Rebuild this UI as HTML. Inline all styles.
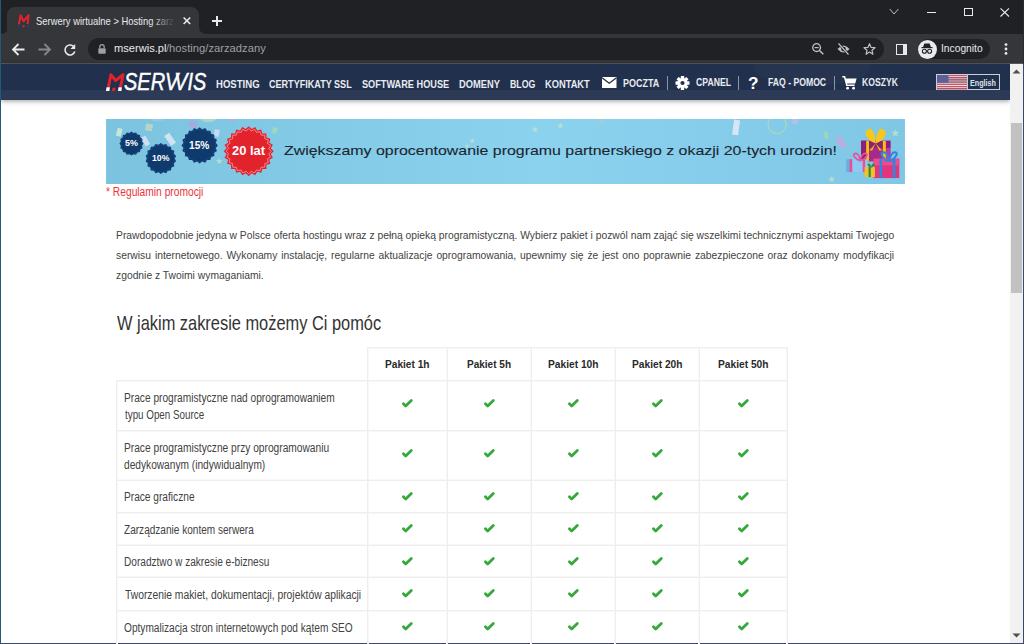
<!DOCTYPE html><html><head><meta charset="utf-8"><style>
*{margin:0;padding:0;box-sizing:border-box}
html,body{width:1024px;height:644px;overflow:hidden;background:#fff;font-family:"Liberation Sans",sans-serif}
.a{position:absolute}
.t{position:absolute;white-space:nowrap;transform-origin:0 0;line-height:normal}
svg{position:absolute;overflow:visible}
</style></head><body><div class="a" style="left:0;top:0;width:1024px;height:34px;background:#202124"></div><div class="a" style="left:7px;top:7px;width:192px;height:27px;background:#35363a;border-radius:8px 8px 0 0"></div><svg style="left:0;top:26px" width="8" height="8"><path d="M0 8 Q8 8 8 0 L8 8 Z" fill="#35363a"/></svg><svg style="left:199px;top:26px" width="8" height="8"><path d="M0 0 Q0 8 8 8 L0 8 Z" fill="#35363a"/></svg><svg style="left:16px;top:13px" width="15" height="15" viewBox="0 0 15 15"><polyline points="2.9,11.2 4.6,2.2 7.6,8.2 12.6,2.2 11.6,11.2" stroke="#e3232c" stroke-width="2" fill="none" stroke-linejoin="round"/><rect x="1.6" y="12.3" width="2.2" height="1.8" fill="#1b3f8a"/><rect x="6.6" y="12.3" width="2" height="1.8" fill="#e3232c"/><rect x="11" y="12.3" width="2.2" height="1.8" fill="#1b3f8a"/></svg><div class="a" style="left:0;top:0;width:178px;height:34px;overflow:hidden"><span class="t" style="left:35.55px;top:14.70px;font:10.5px 'Liberation Sans';color:#e8eaed;transform:scaleX(0.8962);">Serwery wirtualne &gt; Hosting zarzadzany</span></div><div class="a" style="left:150px;top:10px;width:28px;height:20px;background:linear-gradient(90deg,rgba(53,54,58,0),#35363a 90%)"></div><div class="a" style="left:176px;top:10px;width:20px;height:20px;background:#35363a"></div><svg style="left:183px;top:17.3px" width="8" height="7.5"><path d="M0.6 0.5 L7.2 7 M7.2 0.5 L0.6 7" stroke="#e8eaed" stroke-width="1.6"/></svg><svg style="left:212px;top:16px" width="10" height="10"><path d="M5 0 V10 M0 5 H10" stroke="#e8eaed" stroke-width="2"/></svg><svg style="left:889px;top:8px" width="11" height="8"><path d="M0.8 1 L5 6 L9.4 1" stroke="#bdc1c6" stroke-width="1" fill="none"/></svg><div class="a" style="left:927px;top:12px;width:9px;height:1px;background:#e8eaed"></div><div class="a" style="left:964px;top:8px;width:8.5px;height:8px;border:1px solid #e8eaed"></div><svg style="left:1000px;top:8px" width="10" height="9"><path d="M0.5 0.3 L9 8.5 M9 0.3 L0.5 8.5" stroke="#e8eaed" stroke-width="1.1"/></svg><div class="a" style="left:0;top:34px;width:1024px;height:29px;background:#35363a"></div><div class="a" style="left:0;top:63px;width:1024px;height:1px;background:#5a5b5f"></div><svg style="left:12px;top:43px" width="13" height="13"><path d="M12.5 6.5 H1.5 M6.5 1 L1 6.5 L6.5 12" stroke="#e8eaed" stroke-width="1.8" fill="none"/></svg><svg style="left:38px;top:43px" width="13" height="13"><path d="M0.5 6.5 H11.5 M6.5 1 L12 6.5 L6.5 12" stroke="#85878a" stroke-width="1.8" fill="none"/></svg><svg style="left:63px;top:42.5px" width="14" height="14"><path d="M11.2 4.2 A5 5 0 1 0 11.8 8.5" stroke="#e8eaed" stroke-width="1.6" fill="none"/><path d="M12.2 1 V6 H7.4 Z" fill="#e8eaed"/></svg><div class="a" style="left:88px;top:38px;width:796px;height:22px;background:#202124;border-radius:11px"></div><svg style="left:98px;top:43.5px" width="8" height="10"><path d="M1.8 4.2 V2.9 A2.2 2.2 0 0 1 6.2 2.9 V4.2" stroke="#9aa0a6" stroke-width="1.2" fill="none"/><rect x="0.3" y="4.2" width="7.4" height="5.5" rx="0.8" fill="#9aa0a6"/></svg><span class="t" style="left:114.29px;top:42.45px;font:11px 'Liberation Sans';color:#e8eaed;transform:scaleX(1.0099);">mserwis.pl</span><span class="t" style="left:166.30px;top:42.45px;font:11px 'Liberation Sans';color:#9aa0a6;transform:scaleX(1.0194);">/hosting/zarzadzany</span><svg style="left:812px;top:43px" width="12" height="12"><circle cx="4.6" cy="4.6" r="3.9" stroke="#bdc1c6" stroke-width="1.3" fill="none"/><path d="M2.6 4.6 H6.6" stroke="#bdc1c6" stroke-width="1.2"/><path d="M7.5 7.5 L11.3 11.3" stroke="#bdc1c6" stroke-width="1.5"/></svg><svg style="left:837px;top:43px" width="13" height="12"><path d="M0.5 6 Q6.5 -1 12.5 6 Q6.5 13 0.5 6 Z" fill="#bdc1c6"/><circle cx="6.5" cy="6" r="2.3" fill="#202124"/><path d="M1.5 0.5 L11.5 11.5" stroke="#202124" stroke-width="2.6"/><path d="M1.5 0.5 L11.5 11.5" stroke="#bdc1c6" stroke-width="1.2"/></svg><svg style="left:863px;top:43px" width="13" height="12"><path d="M6.5 0.8 L8.1 4.4 L12 4.7 L9 7.3 L9.9 11.2 L6.5 9.1 L3.1 11.2 L4 7.3 L1 4.7 L4.9 4.4 Z" stroke="#bdc1c6" stroke-width="1.2" fill="none" stroke-linejoin="round"/></svg><div class="a" style="left:896px;top:43.5px;width:11px;height:11px;border:1.5px solid #e8eaed;border-right-width:4px"></div><div class="a" style="left:917.5px;top:39px;width:72px;height:20px;background:#202124;border-radius:10px"></div><div class="a" style="left:917.5px;top:39.5px;width:19px;height:19px;background:#e8eaed;border-radius:50%"></div><svg style="left:920px;top:42px" width="14" height="14"><path d="M3 5.2 L4.4 1.5 H9.6 L11 5.2 Z" fill="#202124"/><rect x="1.5" y="5" width="11" height="1.2" fill="#202124"/><circle cx="4.4" cy="9.3" r="2" stroke="#202124" stroke-width="1.1" fill="none"/><circle cx="9.6" cy="9.3" r="2" stroke="#202124" stroke-width="1.1" fill="none"/><path d="M6.4 9 H7.6" stroke="#202124" stroke-width="1"/></svg><span class="t" style="left:941.48px;top:43.15px;font:10px 'Liberation Sans';color:#e8eaed;transform:scaleX(1.0254);">Incognito</span><svg style="left:1004px;top:43px" width="4" height="12"><circle cx="2" cy="1.6" r="1.4" fill="#e8eaed"/><circle cx="2" cy="6" r="1.4" fill="#e8eaed"/><circle cx="2" cy="10.4" r="1.4" fill="#e8eaed"/></svg><div class="a" style="left:1px;top:64px;width:1009px;height:36px;background:#21304c;box-shadow:0 1px 5px rgba(0,0,0,.4)"></div><div class="a" style="left:1px;top:89.5px;width:1009px;height:10px;background:#2d3a55"></div><div class="a" style="left:1px;top:64px;width:1009px;height:25.5px;overflow:hidden"><div class="a" style="left:752px;top:-18px;width:118px;height:40px;border-radius:50%;background:rgba(255,255,255,0.022)"></div></div><svg style="left:104px;top:72px" width="24" height="20" viewBox="0 0 24 20"><polyline points="4.4,15.2 6.9,2.7 11.6,8.6 19,2.7 16.5,15.2" stroke="#e52229" stroke-width="3" fill="none" stroke-linejoin="round"/><path d="M2.5 15.3 H5.9 L5.4 19.1 H2 Z" fill="#fff"/><path d="M8.4 15.7 H11.6 L11.2 19 H8 Z" fill="#e52229"/><path d="M14.5 15.3 H17.9 L17.4 19.1 H14 Z" fill="#fff"/></svg><div class="t" style="left:124.3px;top:69.4px;font:italic 23.5px 'Liberation Sans';color:#fff;-webkit-text-stroke:0.45px #fff;transform:scaleX(0.85)">SER<span style="letter-spacing:-5px">V</span>VIS</div><span class="t" style="left:216.16px;top:77.60px;font:bold 10.5px 'Liberation Sans';color:#e9ecf1;transform:scaleX(0.9118);">HOSTING</span><span class="t" style="left:269.46px;top:77.60px;font:bold 10.5px 'Liberation Sans';color:#e9ecf1;transform:scaleX(0.8623);">CERTYFIKATY SSL</span><span class="t" style="left:362.24px;top:77.60px;font:bold 10.5px 'Liberation Sans';color:#e9ecf1;transform:scaleX(0.8737);">SOFTWARE HOUSE</span><span class="t" style="left:459.08px;top:77.60px;font:bold 10.5px 'Liberation Sans';color:#e9ecf1;transform:scaleX(0.8872);">DOMENY</span><span class="t" style="left:510.01px;top:77.60px;font:bold 10.5px 'Liberation Sans';color:#e9ecf1;transform:scaleX(0.8379);">BLOG</span><span class="t" style="left:544.98px;top:77.60px;font:bold 10.5px 'Liberation Sans';color:#e9ecf1;transform:scaleX(0.8853);">KONTAKT</span><svg style="left:602px;top:77px" width="15" height="11"><rect x="0" y="0" width="14.5" height="11" fill="#fff"/><path d="M0 0.8 L7.25 6.2 L14.5 0.8" stroke="#21304c" stroke-width="1.4" fill="none"/></svg><span class="t" style="left:623.40px;top:76.60px;font:bold 10.5px 'Liberation Sans';color:#e9ecf1;transform:scaleX(0.8551);">POCZTA</span><div class="a" style="left:667.3px;top:75.5px;width:1px;height:14px;background:#8b95a8"></div><div class="a" style="left:738.3px;top:75.5px;width:1px;height:14px;background:#8b95a8"></div><div class="a" style="left:833.5px;top:75.5px;width:1px;height:14px;background:#8b95a8"></div><svg style="left:674.5px;top:75.5px" width="15" height="14" viewBox="-7.5 -7 15 14"><g fill="#fff"><rect x="-1.7" y="-7" width="3.4" height="3.5" rx="0.5" transform="rotate(0)"/><rect x="-1.7" y="-7" width="3.4" height="3.5" rx="0.5" transform="rotate(45)"/><rect x="-1.7" y="-7" width="3.4" height="3.5" rx="0.5" transform="rotate(90)"/><rect x="-1.7" y="-7" width="3.4" height="3.5" rx="0.5" transform="rotate(135)"/><rect x="-1.7" y="-7" width="3.4" height="3.5" rx="0.5" transform="rotate(180)"/><rect x="-1.7" y="-7" width="3.4" height="3.5" rx="0.5" transform="rotate(225)"/><rect x="-1.7" y="-7" width="3.4" height="3.5" rx="0.5" transform="rotate(270)"/><rect x="-1.7" y="-7" width="3.4" height="3.5" rx="0.5" transform="rotate(315)"/><circle r="5"/></g><circle r="2.1" fill="#21304c"/></svg><span class="t" style="left:696.17px;top:76.30px;font:bold 10.5px 'Liberation Sans';color:#e9ecf1;transform:scaleX(0.8249);">CPANEL</span><span class="t" style="left:748.19px;top:73.61px;font:bold 17px 'Liberation Sans';color:#ffffff;transform:scaleX(1.0116);">?</span><span class="t" style="left:767.92px;top:76.30px;font:bold 10.5px 'Liberation Sans';color:#e9ecf1;transform:scaleX(0.8233);">FAQ - POMOC</span><svg style="left:842px;top:75.5px" width="15" height="14" viewBox="0 0 15 14"><path d="M0.3 0.8 H2.6 L4.8 9.3 H12.6" stroke="#fff" stroke-width="1.5" fill="none"/><path d="M3.4 2.6 H14.6 L13.2 7.6 H4.6 Z" fill="#fff"/><circle cx="5.6" cy="12.2" r="1.4" fill="#fff"/><circle cx="11.6" cy="12.2" r="1.4" fill="#fff"/></svg><span class="t" style="left:862.33px;top:76.40px;font:bold 10.5px 'Liberation Sans';color:#e9ecf1;transform:scaleX(0.8205);">KOSZYK</span><div class="a" style="left:936px;top:73.8px;width:64px;height:16.4px;border:1px solid #c9ced8;background:#21304c"></div><svg style="left:937px;top:74.8px" width="30" height="14.4" viewBox="0 0 30 14.4"><rect x="0" y="0.000" width="30" height="1.108" fill="#d25666"/><rect x="0" y="1.108" width="30" height="1.108" fill="#f2dde1"/><rect x="0" y="2.215" width="30" height="1.108" fill="#d25666"/><rect x="0" y="3.323" width="30" height="1.108" fill="#f2dde1"/><rect x="0" y="4.431" width="30" height="1.108" fill="#d25666"/><rect x="0" y="5.538" width="30" height="1.108" fill="#f2dde1"/><rect x="0" y="6.646" width="30" height="1.108" fill="#d25666"/><rect x="0" y="7.754" width="30" height="1.108" fill="#f2dde1"/><rect x="0" y="8.862" width="30" height="1.108" fill="#d25666"/><rect x="0" y="9.969" width="30" height="1.108" fill="#f2dde1"/><rect x="0" y="11.077" width="30" height="1.108" fill="#d25666"/><rect x="0" y="12.185" width="30" height="1.108" fill="#f2dde1"/><rect x="0" y="13.292" width="30" height="1.108" fill="#d25666"/><rect x="0" y="0" width="11.5" height="7.754" fill="#5c6299"/></svg><div class="a" style="left:967px;top:74.8px;width:1px;height:14.4px;background:#c9ced8"></div><span class="t" style="left:970.35px;top:76.70px;font:bold 9.5px 'Liberation Sans';color:#dfe3ea;transform:scaleX(0.7553);">English</span><div class="a" style="left:1009.5px;top:64px;width:13.5px;height:579px;background:#f1f1f1"></div><div class="a" style="left:1011px;top:123px;width:10.8px;height:169.5px;background:#c1c1c1"></div><svg style="left:1011px;top:67px" width="11" height="8"><path d="M1.5 6.5 L5.5 2.5 L9.5 6.5 Z" fill="#505050"/></svg><svg style="left:1011px;top:632px" width="11" height="8"><path d="M1.5 1.5 L5.5 5.5 L9.5 1.5 Z" fill="#505050"/></svg><div class="a" style="left:0;top:0;width:1px;height:644px;background:#235a78"></div><div class="a" style="left:1023px;top:64px;width:1px;height:580px;background:#3a4a6c"></div><div class="a" style="left:1023px;top:0;width:1px;height:64px;background:#2a2b30"></div><div class="a" style="left:0;top:643px;width:1024px;height:1px;background:#3a4a6c"></div><svg style="left:105.8px;top:118.6px;overflow:hidden" width="799.0" height="65.1" viewBox="0 0 799.0 65.1"><defs><linearGradient id="bg" x1="0" y1="0" x2="1" y2="0"><stop offset="0" stop-color="#7bc3df"/><stop offset="0.55" stop-color="#8bd2ef"/><stop offset="1" stop-color="#80c7e6"/></linearGradient></defs><rect width="799.0" height="65.1" fill="url(#bg)"/><rect x="10.7" y="9.2" width="5" height="8" fill="#d8ecd8" opacity="0.8" transform="rotate(15 13.2 13.2)"/><rect x="39.5" y="4.8" width="7" height="7" fill="#c4d8c0" opacity="0.8" transform="rotate(10 43.0 8.3)"/><rect x="37.0" y="17.0" width="5" height="10" fill="#e2e4f4" opacity="0.8" transform="rotate(-30 39.5 22.0)"/><rect x="61.1" y="14.3" width="6" height="12" fill="#e4eaf6" opacity="0.8" transform="rotate(-35 64.1 20.3)"/><rect x="83.0" y="2.3" width="8" height="6" fill="#b0a4dc" opacity="0.8" transform="rotate(15 87.0 5.3)"/><rect x="108.2" y="10.6" width="5" height="7" fill="#dcdcf4" opacity="0.8" transform="rotate(10 110.7 14.1)"/><rect x="166.2" y="8.4" width="5" height="6" fill="#a8dcb0" opacity="0.8" transform="rotate(20 168.7 11.4)"/><rect x="123.5" y="-0.6" width="6" height="3" fill="#b8a8e0" opacity="0.8" transform="rotate(0 126.5 0.9)"/><rect x="492.7" y="0.4" width="4" height="4" fill="#a8d0c0" opacity="0.8" transform="rotate(0 494.7 2.4)"/><rect x="627.1" y="0.9" width="6" height="15" fill="#e8eef8" opacity="0.8" transform="rotate(8 630.1 8.4)"/><rect x="685.9" y="-0.1" width="6" height="5" fill="#c8b8ec" opacity="0.8" transform="rotate(20 688.9 2.4)"/><rect x="718.2" y="12.4" width="4" height="8" fill="#a0d8b0" opacity="0.8" transform="rotate(-15 720.2 16.4)"/><rect x="732.2" y="17.4" width="6" height="12" fill="#c8a8e0" opacity="0.8" transform="rotate(-35 735.2 23.4)"/><circle cx="671.1" cy="5.6" r="9" fill="none" stroke="#bfe0a0" stroke-width="1.3" opacity="0.6"/><path d="M94.2 0 A9 6 0 0 0 110.2 0 Z" fill="#d8e8b0" opacity="0.5"/><path d="M44.2 0 A8 5 0 0 0 58.2 0 Z" fill="#a8d0e8" opacity="0.5"/><path d="M25.40,12.60 L27.51,14.01 L29.99,13.51 L31.40,15.62 L33.89,16.11 L34.38,18.60 L36.49,20.01 L35.99,22.49 L37.40,24.60 L35.99,26.71 L36.49,29.19 L34.38,30.60 L33.89,33.09 L31.40,33.58 L29.99,35.69 L27.51,35.19 L25.40,36.60 L23.29,35.19 L20.81,35.69 L19.40,33.58 L16.91,33.09 L16.42,30.60 L14.31,29.19 L14.81,26.71 L13.40,24.60 L14.81,22.49 L14.31,20.01 L16.42,18.60 L16.91,16.11 L19.40,15.62 L20.81,13.51 L23.29,14.01 Z" fill="#0f3a6e"/><circle cx="25.4" cy="24.6" r="10.6" fill="none" stroke="#5a7aa8" stroke-width="0.5" stroke-dasharray="1 1" opacity="0.8"/><path d="M54.80,24.10 L57.22,25.86 L60.10,25.03 L61.77,27.52 L64.76,27.73 L65.49,30.63 L68.22,31.85 L67.91,34.83 L70.06,36.91 L68.75,39.60 L70.06,42.29 L67.91,44.37 L68.22,47.35 L65.49,48.57 L64.76,51.47 L61.78,51.68 L60.10,54.17 L57.22,53.34 L54.80,55.10 L52.38,53.34 L49.50,54.17 L47.82,51.68 L44.84,51.47 L44.11,48.57 L41.38,47.35 L41.69,44.37 L39.54,42.29 L40.85,39.60 L39.54,36.91 L41.69,34.83 L41.38,31.85 L44.11,30.63 L44.84,27.73 L47.83,27.52 L49.50,25.03 L52.38,25.86 Z" fill="#0f3a6e"/><circle cx="54.8" cy="39.6" r="13.6" fill="none" stroke="#5a7aa8" stroke-width="0.5" stroke-dasharray="1 1" opacity="0.8"/><path d="M93.60,8.20 L96.16,10.22 L99.22,9.09 L101.04,11.81 L104.30,11.68 L105.18,14.82 L108.32,15.70 L108.19,18.96 L110.91,20.78 L109.78,23.84 L111.80,26.40 L109.78,28.96 L110.91,32.02 L108.19,33.84 L108.32,37.10 L105.18,37.98 L104.30,41.12 L101.04,40.99 L99.22,43.71 L96.16,42.58 L93.60,44.60 L91.04,42.58 L87.98,43.71 L86.16,40.99 L82.90,41.12 L82.02,37.98 L78.88,37.10 L79.01,33.84 L76.29,32.02 L77.42,28.96 L75.40,26.40 L77.42,23.84 L76.29,20.78 L79.01,18.96 L78.88,15.70 L82.02,14.82 L82.90,11.68 L86.16,11.81 L87.98,9.09 L91.04,10.22 Z" fill="#0f3a6e"/><circle cx="93.6" cy="26.4" r="16.0" fill="none" stroke="#5a7aa8" stroke-width="0.5" stroke-dasharray="1 1" opacity="0.8"/><path d="M142.70,7.20 L145.61,10.09 L149.17,8.05 L151.23,11.60 L155.20,10.55 L156.28,14.51 L160.38,14.52 L160.39,18.62 L164.35,19.70 L163.30,23.67 L166.85,25.73 L164.81,29.29 L167.70,32.20 L164.81,35.11 L166.85,38.67 L163.30,40.73 L164.35,44.70 L160.39,45.78 L160.38,49.88 L156.28,49.89 L155.20,53.85 L151.23,52.80 L149.17,56.35 L145.61,54.31 L142.70,57.20 L139.79,54.31 L136.23,56.35 L134.17,52.80 L130.20,53.85 L129.12,49.89 L125.02,49.88 L125.01,45.78 L121.05,44.70 L122.10,40.73 L118.55,38.67 L120.59,35.11 L117.70,32.20 L120.59,29.29 L118.55,25.73 L122.10,23.67 L121.05,19.70 L125.01,18.62 L125.02,14.52 L129.12,14.51 L130.20,10.55 L134.17,11.60 L136.23,8.05 L139.79,10.09 Z" fill="#e3232c"/><path d="M142.70,9.60 L145.35,12.07 L148.55,10.37 L150.47,13.45 L154.00,12.63 L155.06,16.09 L158.68,16.22 L158.81,19.84 L162.27,20.90 L161.45,24.43 L164.53,26.35 L162.83,29.55 L165.30,32.20 L162.83,34.85 L164.53,38.05 L161.45,39.97 L162.27,43.50 L158.81,44.56 L158.68,48.18 L155.06,48.31 L154.00,51.77 L150.47,50.95 L148.55,54.03 L145.35,52.33 L142.70,54.80 L140.05,52.33 L136.85,54.03 L134.93,50.95 L131.40,51.77 L130.34,48.31 L126.72,48.18 L126.59,44.56 L123.13,43.50 L123.95,39.97 L120.87,38.05 L122.57,34.85 L120.10,32.20 L122.57,29.55 L120.87,26.35 L123.95,24.43 L123.13,20.90 L126.59,19.84 L126.72,16.22 L130.34,16.09 L131.40,12.63 L134.93,13.45 L136.85,10.37 L140.05,12.07 Z" fill="none" stroke="#f6b0b4" stroke-width="0.7"/><rect x="755.10" y="21.80" width="29.30" height="20.60" fill="#a42a8e" /><rect x="755.10" y="21.80" width="5.10" height="20.60" fill="#8f2079" /><rect x="778.20" y="21.80" width="6.20" height="20.60" fill="#b93ba2" /><rect x="755.10" y="21.80" width="29.30" height="7.10" fill="#8c1f7c" /><rect x="760.20" y="21.80" width="2.80" height="20.60" fill="#f5c20a" /><rect x="776.90" y="21.80" width="3.00" height="20.60" fill="#f5c20a" /><path d="M769.7 24.4 C 760.2 21.4 756.2 11.4 763.2 9.9 C 767.2 9.4 769.2 16.4 769.7 24.4 Z" fill="#f7c81a"/><path d="M769.7 24.4 C 779.2 21.4 783.2 11.4 776.2 9.9 C 772.2 9.4 770.2 16.4 769.7 24.4 Z" fill="#f7c81a"/><path d="M769.7 24.4 L763.2 31.4 L766.2 31.4 Z M769.7 24.4 L776.2 31.4 L773.2 31.4 Z" fill="#f0b800"/><rect x="740.20" y="40.20" width="21.30" height="12.90" fill="#8fcaf2" /><rect x="740.20" y="40.20" width="6.00" height="12.90" fill="#6aaee0" /><rect x="743.60" y="40.20" width="2.60" height="12.90" fill="#ec4f9a" /><rect x="756.70" y="40.20" width="2.50" height="12.90" fill="#ec4f9a" /><path d="M751.7 40.9 q-7 -6 -2 -6.5 q3 0 4.5 6.5 q2 -6.5 5 -6.5 q5 0.5 -2.5 6.5 z" fill="none" stroke="#ec4f9a" stroke-width="1.6"/><rect x="767.50" y="39.70" width="25.80" height="19.40" fill="#e2357b" /><rect x="767.50" y="39.70" width="25.80" height="6.70" fill="#ef4c8c" /><rect x="773.50" y="39.70" width="2.70" height="19.40" fill="#2f86e0" /><rect x="786.80" y="39.70" width="2.70" height="19.40" fill="#2f86e0" /><path d="M780.2 41.7 q-8 -8 -2.5 -8.5 q3.5 0 5.5 8.5 q2 -8.5 5.5 -8.5 q5.5 0.5 -3 8.5 z" fill="none" stroke="#2f86e0" stroke-width="2"/><rect x="758.60" y="48.10" width="10.40" height="10.00" fill="#f2c22a" /><rect x="762.60" y="48.10" width="2.20" height="10.00" fill="#2e8b3a" /><path d="M763.7 48.6 q-4 -4 -1 -4 q2 0 2.3 4 q0.5 -4 2.5 -4 q3 0 -1.5 4 z" fill="#2e8b3a"/><path d="M789.40,10.30 L790.46,12.84 L793.20,13.06 L791.11,14.86 L791.75,17.54 L789.40,16.10 L787.05,17.54 L787.69,14.86 L785.60,13.06 L788.34,12.84 Z" fill="#cfe6c0" opacity="0.7"/><path d="M725.80,56.80 L726.73,59.03 L729.13,59.22 L727.30,60.79 L727.86,63.13 L725.80,61.88 L723.74,63.13 L724.30,60.79 L722.47,59.22 L724.87,59.03 Z" fill="#cfe6c0" opacity="0.7"/><path d="M113.30,38.70 L114.23,40.93 L116.63,41.12 L114.80,42.69 L115.36,45.03 L113.30,43.78 L111.24,45.03 L111.80,42.69 L109.97,41.12 L112.37,40.93 Z" fill="#cfe6c0" opacity="0.7"/><path d="M428.90,7.20 L429.77,9.30 L432.04,9.48 L430.31,10.96 L430.84,13.17 L428.90,11.98 L426.96,13.17 L427.49,10.96 L425.76,9.48 L428.03,9.30 Z" fill="#cfe6c0" opacity="0.7"/><path d="M454.50,3.50 L455.37,5.60 L457.64,5.78 L455.91,7.26 L456.44,9.47 L454.50,8.29 L452.56,9.47 L453.09,7.26 L451.36,5.78 L453.63,5.60 Z" fill="#cfe6c0" opacity="0.7"/><path d="M366.20,18.80 L366.99,20.71 L369.05,20.87 L367.48,22.22 L367.96,24.23 L366.20,23.15 L364.44,24.23 L364.92,22.22 L363.35,20.87 L365.41,20.71 Z" fill="#cfe6c0" opacity="0.7"/><path d="M361.10,24.60 L361.76,26.19 L363.48,26.33 L362.17,27.45 L362.57,29.12 L361.10,28.22 L359.63,29.12 L360.03,27.45 L358.72,26.33 L360.44,26.19 Z" fill="#cfe6c0" opacity="0.7"/></svg><span class="t" style="left:124.79px;top:138.22px;font:bold 8.6px 'Liberation Sans';color:#ffffff;transform:scaleX(1.0336);">5%</span><span class="t" style="left:151.72px;top:153.25px;font:bold 9px 'Liberation Sans';color:#ffffff;transform:scaleX(0.9709);">10%</span><span class="t" style="left:189.49px;top:138.41px;font:bold 11.7px 'Liberation Sans';color:#ffffff;transform:scaleX(0.8661);">15%</span><span class="t" style="left:231.87px;top:143.84px;font:bold 12px 'Liberation Sans';color:#ffffff;transform:scaleX(1.0797);">20 lat</span><span class="t" style="left:283.83px;top:143.28px;font:13.5px 'Liberation Sans';color:#1d2530;transform:scaleX(1.1791);-webkit-text-stroke:0.1px #1d2530">Zwiększamy oprocentowanie programu partnerskiego z okazji 20-tych urodzin!</span><span class="t" style="left:105.63px;top:185.44px;font:12px 'Liberation Sans';color:#ec3339;transform:scaleX(0.8540);">* Regulamin promocji</span><span class="t" style="left:116.13px;top:228.02px;font:11.8px 'Liberation Sans';color:#424242;transform:scaleX(0.8742);">Prawdopodobnie jedyna w Polsce oferta hostingu wraz z pełną opieką programistyczną. Wybierz pakiet i pozwól nam zająć się wszelkimi technicznymi aspektami Twojego</span><span class="t" style="left:116.13px;top:248.02px;font:11.8px 'Liberation Sans';color:#424242;transform:scaleX(0.8742);white-space:normal;width:890.1px;text-align:justify;text-align-last:justify">serwisu internetowego. Wykonamy instalację, regularne aktualizacje oprogramowania, upewnimy się że jest ono poprawnie zabezpieczone oraz dokonamy modyfikacji</span><span class="t" style="left:116.13px;top:268.22px;font:11.8px 'Liberation Sans';color:#424242;transform:scaleX(0.8742);">zgodnie z Twoimi wymaganiami.</span><span class="t" style="left:116.72px;top:312.28px;font:19.8px 'Liberation Sans';color:#333333;transform:scaleX(0.8288);">W jakim zakresie możemy Ci pomóc</span><div class="a" style="left:367.4px;top:348px;width:421.0px;height:1px;background:#f8f8f8"></div><div class="a" style="left:116.0px;top:381px;width:672.4px;height:1px;background:#f8f8f8"></div><div class="a" style="left:116.0px;top:431px;width:672.4px;height:1px;background:#f8f8f8"></div><div class="a" style="left:116.0px;top:479px;width:672.4px;height:1px;background:#f8f8f8"></div><div class="a" style="left:116.0px;top:513px;width:672.4px;height:1px;background:#f8f8f8"></div><div class="a" style="left:116.0px;top:544px;width:672.4px;height:1px;background:#f8f8f8"></div><div class="a" style="left:116.0px;top:576px;width:672.4px;height:1px;background:#f8f8f8"></div><div class="a" style="left:116.0px;top:611px;width:672.4px;height:1px;background:#f8f8f8"></div><div class="a" style="left:368px;top:347.0px;width:1px;height:300.0px;background:#f8f8f8"></div><div class="a" style="left:446px;top:347.0px;width:1px;height:300.0px;background:#f8f8f8"></div><div class="a" style="left:530px;top:347.0px;width:1px;height:300.0px;background:#f8f8f8"></div><div class="a" style="left:614px;top:347.0px;width:1px;height:300.0px;background:#f8f8f8"></div><div class="a" style="left:698px;top:347.0px;width:1px;height:300.0px;background:#f8f8f8"></div><div class="a" style="left:786px;top:347.0px;width:1px;height:300.0px;background:#f8f8f8"></div><div class="a" style="left:117px;top:380.0px;width:1px;height:267.0px;background:#f8f8f8"></div><div class="a" style="left:367.4px;top:347px;width:421.0px;height:1px;background:#eeeeee"></div><div class="a" style="left:116.0px;top:380px;width:672.4px;height:1px;background:#eeeeee"></div><div class="a" style="left:116.0px;top:430px;width:672.4px;height:1px;background:#eeeeee"></div><div class="a" style="left:116.0px;top:480px;width:672.4px;height:1px;background:#eeeeee"></div><div class="a" style="left:116.0px;top:512px;width:672.4px;height:1px;background:#eeeeee"></div><div class="a" style="left:116.0px;top:545px;width:672.4px;height:1px;background:#eeeeee"></div><div class="a" style="left:116.0px;top:577px;width:672.4px;height:1px;background:#eeeeee"></div><div class="a" style="left:116.0px;top:610px;width:672.4px;height:1px;background:#eeeeee"></div><div class="a" style="left:367px;top:347.0px;width:1px;height:300.0px;background:#eeeeee"></div><div class="a" style="left:447px;top:347.0px;width:1px;height:300.0px;background:#eeeeee"></div><div class="a" style="left:531px;top:347.0px;width:1px;height:300.0px;background:#eeeeee"></div><div class="a" style="left:615px;top:347.0px;width:1px;height:300.0px;background:#eeeeee"></div><div class="a" style="left:699px;top:347.0px;width:1px;height:300.0px;background:#eeeeee"></div><div class="a" style="left:787px;top:347.0px;width:1px;height:300.0px;background:#eeeeee"></div><div class="a" style="left:116px;top:380.0px;width:1px;height:267.0px;background:#eeeeee"></div><span class="t" style="left:385.09px;top:357.89px;font:bold 11.5px 'Liberation Sans';color:#2a2a2a;transform:scaleX(0.8816);">Pakiet 1h</span><span class="t" style="left:467.00px;top:357.89px;font:bold 11.5px 'Liberation Sans';color:#2a2a2a;transform:scaleX(0.8714);">Pakiet 5h</span><span class="t" style="left:547.59px;top:357.89px;font:bold 11.5px 'Liberation Sans';color:#2a2a2a;transform:scaleX(0.8881);">Pakiet 10h</span><span class="t" style="left:631.99px;top:357.89px;font:bold 11.5px 'Liberation Sans';color:#2a2a2a;transform:scaleX(0.8881);">Pakiet 20h</span><span class="t" style="left:718.09px;top:357.89px;font:bold 11.5px 'Liberation Sans';color:#2a2a2a;transform:scaleX(0.8881);">Pakiet 50h</span><span class="t" style="left:123.95px;top:391.44px;font:12px 'Liberation Sans';color:#424242;transform:scaleX(0.8470);">Prace programistyczne nad oprogramowaniem</span><span class="t" style="left:124.64px;top:407.84px;font:12px 'Liberation Sans';color:#424242;transform:scaleX(0.8177);">typu Open Source</span><span class="t" style="left:123.95px;top:441.44px;font:12px 'Liberation Sans';color:#424242;transform:scaleX(0.8497);">Prace programistyczne przy oprogramowaniu</span><span class="t" style="left:124.38px;top:457.84px;font:12px 'Liberation Sans';color:#424242;transform:scaleX(0.8471);">dedykowanym (indywidualnym)</span><span class="t" style="left:123.95px;top:490.24px;font:12px 'Liberation Sans';color:#424242;transform:scaleX(0.8460);">Prace graficzne</span><span class="t" style="left:124.46px;top:523.04px;font:12px 'Liberation Sans';color:#424242;transform:scaleX(0.8386);">Zarządzanie kontem serwera</span><span class="t" style="left:123.96px;top:555.44px;font:12px 'Liberation Sans';color:#424242;transform:scaleX(0.8414);">Doradztwo w zakresie e-biznesu</span><span class="t" style="left:124.54px;top:588.34px;font:12px 'Liberation Sans';color:#424242;transform:scaleX(0.8593);">Tworzenie makiet, dokumentacji, projektów aplikacji</span><span class="t" style="left:124.29px;top:620.84px;font:12px 'Liberation Sans';color:#424242;transform:scaleX(0.8442);">Optymalizacja stron internetowych pod kątem SEO</span><svg style="left:400.85px;top:399.20px" width="12" height="10" viewBox="0 0 12 10"><path d="M2.4 4.8 L4.7 7.1 L10.3 1.6" stroke="#36a93a" stroke-width="2.8" fill="none" stroke-linecap="round" stroke-linejoin="round"/></svg><svg style="left:482.55px;top:399.20px" width="12" height="10" viewBox="0 0 12 10"><path d="M2.4 4.8 L4.7 7.1 L10.3 1.6" stroke="#36a93a" stroke-width="2.8" fill="none" stroke-linecap="round" stroke-linejoin="round"/></svg><svg style="left:566.65px;top:399.20px" width="12" height="10" viewBox="0 0 12 10"><path d="M2.4 4.8 L4.7 7.1 L10.3 1.6" stroke="#36a93a" stroke-width="2.8" fill="none" stroke-linecap="round" stroke-linejoin="round"/></svg><svg style="left:650.70px;top:399.20px" width="12" height="10" viewBox="0 0 12 10"><path d="M2.4 4.8 L4.7 7.1 L10.3 1.6" stroke="#36a93a" stroke-width="2.8" fill="none" stroke-linecap="round" stroke-linejoin="round"/></svg><svg style="left:736.70px;top:399.20px" width="12" height="10" viewBox="0 0 12 10"><path d="M2.4 4.8 L4.7 7.1 L10.3 1.6" stroke="#36a93a" stroke-width="2.8" fill="none" stroke-linecap="round" stroke-linejoin="round"/></svg><svg style="left:400.85px;top:449.20px" width="12" height="10" viewBox="0 0 12 10"><path d="M2.4 4.8 L4.7 7.1 L10.3 1.6" stroke="#36a93a" stroke-width="2.8" fill="none" stroke-linecap="round" stroke-linejoin="round"/></svg><svg style="left:482.55px;top:449.20px" width="12" height="10" viewBox="0 0 12 10"><path d="M2.4 4.8 L4.7 7.1 L10.3 1.6" stroke="#36a93a" stroke-width="2.8" fill="none" stroke-linecap="round" stroke-linejoin="round"/></svg><svg style="left:566.65px;top:449.20px" width="12" height="10" viewBox="0 0 12 10"><path d="M2.4 4.8 L4.7 7.1 L10.3 1.6" stroke="#36a93a" stroke-width="2.8" fill="none" stroke-linecap="round" stroke-linejoin="round"/></svg><svg style="left:650.70px;top:449.20px" width="12" height="10" viewBox="0 0 12 10"><path d="M2.4 4.8 L4.7 7.1 L10.3 1.6" stroke="#36a93a" stroke-width="2.8" fill="none" stroke-linecap="round" stroke-linejoin="round"/></svg><svg style="left:736.70px;top:449.20px" width="12" height="10" viewBox="0 0 12 10"><path d="M2.4 4.8 L4.7 7.1 L10.3 1.6" stroke="#36a93a" stroke-width="2.8" fill="none" stroke-linecap="round" stroke-linejoin="round"/></svg><svg style="left:400.85px;top:491.90px" width="12" height="10" viewBox="0 0 12 10"><path d="M2.4 4.8 L4.7 7.1 L10.3 1.6" stroke="#36a93a" stroke-width="2.8" fill="none" stroke-linecap="round" stroke-linejoin="round"/></svg><svg style="left:482.55px;top:491.90px" width="12" height="10" viewBox="0 0 12 10"><path d="M2.4 4.8 L4.7 7.1 L10.3 1.6" stroke="#36a93a" stroke-width="2.8" fill="none" stroke-linecap="round" stroke-linejoin="round"/></svg><svg style="left:566.65px;top:491.90px" width="12" height="10" viewBox="0 0 12 10"><path d="M2.4 4.8 L4.7 7.1 L10.3 1.6" stroke="#36a93a" stroke-width="2.8" fill="none" stroke-linecap="round" stroke-linejoin="round"/></svg><svg style="left:650.70px;top:491.90px" width="12" height="10" viewBox="0 0 12 10"><path d="M2.4 4.8 L4.7 7.1 L10.3 1.6" stroke="#36a93a" stroke-width="2.8" fill="none" stroke-linecap="round" stroke-linejoin="round"/></svg><svg style="left:736.70px;top:491.90px" width="12" height="10" viewBox="0 0 12 10"><path d="M2.4 4.8 L4.7 7.1 L10.3 1.6" stroke="#36a93a" stroke-width="2.8" fill="none" stroke-linecap="round" stroke-linejoin="round"/></svg><svg style="left:400.85px;top:524.20px" width="12" height="10" viewBox="0 0 12 10"><path d="M2.4 4.8 L4.7 7.1 L10.3 1.6" stroke="#36a93a" stroke-width="2.8" fill="none" stroke-linecap="round" stroke-linejoin="round"/></svg><svg style="left:482.55px;top:524.20px" width="12" height="10" viewBox="0 0 12 10"><path d="M2.4 4.8 L4.7 7.1 L10.3 1.6" stroke="#36a93a" stroke-width="2.8" fill="none" stroke-linecap="round" stroke-linejoin="round"/></svg><svg style="left:566.65px;top:524.20px" width="12" height="10" viewBox="0 0 12 10"><path d="M2.4 4.8 L4.7 7.1 L10.3 1.6" stroke="#36a93a" stroke-width="2.8" fill="none" stroke-linecap="round" stroke-linejoin="round"/></svg><svg style="left:650.70px;top:524.20px" width="12" height="10" viewBox="0 0 12 10"><path d="M2.4 4.8 L4.7 7.1 L10.3 1.6" stroke="#36a93a" stroke-width="2.8" fill="none" stroke-linecap="round" stroke-linejoin="round"/></svg><svg style="left:736.70px;top:524.20px" width="12" height="10" viewBox="0 0 12 10"><path d="M2.4 4.8 L4.7 7.1 L10.3 1.6" stroke="#36a93a" stroke-width="2.8" fill="none" stroke-linecap="round" stroke-linejoin="round"/></svg><svg style="left:400.85px;top:556.60px" width="12" height="10" viewBox="0 0 12 10"><path d="M2.4 4.8 L4.7 7.1 L10.3 1.6" stroke="#36a93a" stroke-width="2.8" fill="none" stroke-linecap="round" stroke-linejoin="round"/></svg><svg style="left:482.55px;top:556.60px" width="12" height="10" viewBox="0 0 12 10"><path d="M2.4 4.8 L4.7 7.1 L10.3 1.6" stroke="#36a93a" stroke-width="2.8" fill="none" stroke-linecap="round" stroke-linejoin="round"/></svg><svg style="left:566.65px;top:556.60px" width="12" height="10" viewBox="0 0 12 10"><path d="M2.4 4.8 L4.7 7.1 L10.3 1.6" stroke="#36a93a" stroke-width="2.8" fill="none" stroke-linecap="round" stroke-linejoin="round"/></svg><svg style="left:650.70px;top:556.60px" width="12" height="10" viewBox="0 0 12 10"><path d="M2.4 4.8 L4.7 7.1 L10.3 1.6" stroke="#36a93a" stroke-width="2.8" fill="none" stroke-linecap="round" stroke-linejoin="round"/></svg><svg style="left:736.70px;top:556.60px" width="12" height="10" viewBox="0 0 12 10"><path d="M2.4 4.8 L4.7 7.1 L10.3 1.6" stroke="#36a93a" stroke-width="2.8" fill="none" stroke-linecap="round" stroke-linejoin="round"/></svg><svg style="left:400.85px;top:589.20px" width="12" height="10" viewBox="0 0 12 10"><path d="M2.4 4.8 L4.7 7.1 L10.3 1.6" stroke="#36a93a" stroke-width="2.8" fill="none" stroke-linecap="round" stroke-linejoin="round"/></svg><svg style="left:482.55px;top:589.20px" width="12" height="10" viewBox="0 0 12 10"><path d="M2.4 4.8 L4.7 7.1 L10.3 1.6" stroke="#36a93a" stroke-width="2.8" fill="none" stroke-linecap="round" stroke-linejoin="round"/></svg><svg style="left:566.65px;top:589.20px" width="12" height="10" viewBox="0 0 12 10"><path d="M2.4 4.8 L4.7 7.1 L10.3 1.6" stroke="#36a93a" stroke-width="2.8" fill="none" stroke-linecap="round" stroke-linejoin="round"/></svg><svg style="left:650.70px;top:589.20px" width="12" height="10" viewBox="0 0 12 10"><path d="M2.4 4.8 L4.7 7.1 L10.3 1.6" stroke="#36a93a" stroke-width="2.8" fill="none" stroke-linecap="round" stroke-linejoin="round"/></svg><svg style="left:736.70px;top:589.20px" width="12" height="10" viewBox="0 0 12 10"><path d="M2.4 4.8 L4.7 7.1 L10.3 1.6" stroke="#36a93a" stroke-width="2.8" fill="none" stroke-linecap="round" stroke-linejoin="round"/></svg><svg style="left:400.85px;top:621.70px" width="12" height="10" viewBox="0 0 12 10"><path d="M2.4 4.8 L4.7 7.1 L10.3 1.6" stroke="#36a93a" stroke-width="2.8" fill="none" stroke-linecap="round" stroke-linejoin="round"/></svg><svg style="left:482.55px;top:621.70px" width="12" height="10" viewBox="0 0 12 10"><path d="M2.4 4.8 L4.7 7.1 L10.3 1.6" stroke="#36a93a" stroke-width="2.8" fill="none" stroke-linecap="round" stroke-linejoin="round"/></svg><svg style="left:566.65px;top:621.70px" width="12" height="10" viewBox="0 0 12 10"><path d="M2.4 4.8 L4.7 7.1 L10.3 1.6" stroke="#36a93a" stroke-width="2.8" fill="none" stroke-linecap="round" stroke-linejoin="round"/></svg><svg style="left:650.70px;top:621.70px" width="12" height="10" viewBox="0 0 12 10"><path d="M2.4 4.8 L4.7 7.1 L10.3 1.6" stroke="#36a93a" stroke-width="2.8" fill="none" stroke-linecap="round" stroke-linejoin="round"/></svg><svg style="left:736.70px;top:621.70px" width="12" height="10" viewBox="0 0 12 10"><path d="M2.4 4.8 L4.7 7.1 L10.3 1.6" stroke="#36a93a" stroke-width="2.8" fill="none" stroke-linecap="round" stroke-linejoin="round"/></svg></body></html>
